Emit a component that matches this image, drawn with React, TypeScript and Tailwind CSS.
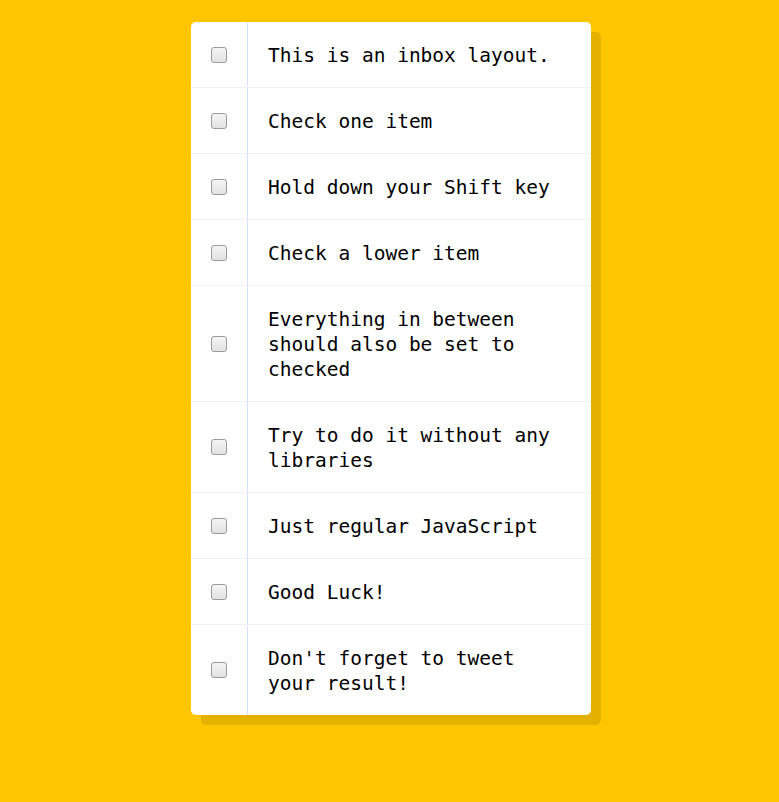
import React from "react";

const items = [
  "This is an inbox layout.",
  "Check one item",
  "Hold down your Shift key",
  "Check a lower item",
  "Everything in between should also be set to checked",
  "Try to do it without any libraries",
  "Just regular JavaScript",
  "Good Luck!",
  "Don't forget to tweet your result!",
];

export default function App() {
  return (
    <div className="min-h-[802px] w-full bg-[#ffc600] pt-[22px] pl-[3px] flex justify-center items-start">
      <div className="w-[400px] bg-white rounded-[5px] shadow-[10px_10px_0_rgba(0,0,0,0.1)]">
        {items.map((t, i) => (
          <div
            key={i}
            className={`flex items-center ${i < items.length - 1 ? "border-b border-[#f1f1f1]" : ""}`}
          >
            <input
              type="checkbox"
              className="m-[20px] w-4 h-4 shrink-0 appearance-none rounded-[3px] border border-[#9a9a9a] bg-gradient-to-b from-[#f4f4f4] to-[#e2e2e2] checked:bg-[#4a90e2]"
            />
            <p
              className="m-0 flex-1 px-[20px] pt-[21px] pb-[19px] border-l border-[#d1e2ff] text-black text-[19.5px] leading-[25px]"
              style={{ fontFamily: '"DejaVu Sans Mono", monospace' }}
            >
              {t}
            </p>
          </div>
        ))}
      </div>
    </div>
  );
}
